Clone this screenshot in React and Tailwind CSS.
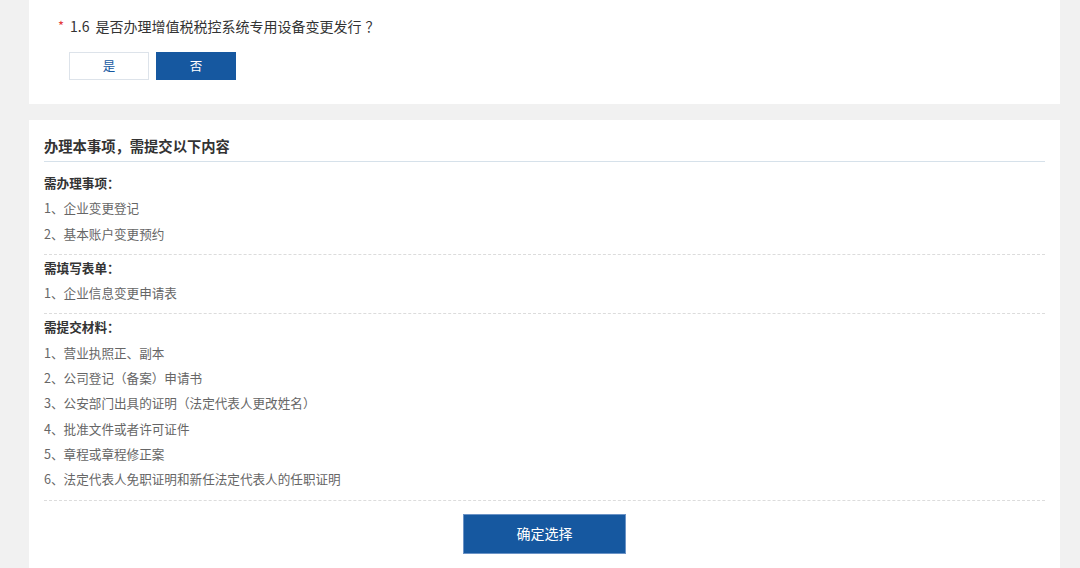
import React, { useState } from 'react';

const sections = [
  { title: '需办理事项：', items: ['1、企业变更登记', '2、基本账户变更预约'] },
  { title: '需填写表单：', items: ['1、企业信息变更申请表'] },
  {
    title: '需提交材料：',
    items: [
      '1、营业执照正、副本',
      '2、公司登记（备案）申请书',
      '3、公安部门出具的证明（法定代表人更改姓名）',
      '4、批准文件或者许可证件',
      '5、章程或章程修正案',
      '6、法定代表人免职证明和新任法定代表人的任职证明',
    ],
  },
];

// keep full-width punctuation at full width
const Zh = ({ text }) =>
  text.split(/([，：？（）、])/).map((part, i) =>
    /^[，：？（）、]$/.test(part) ? (
      <span key={i} className="inline-block w-[1em] text-center">{part}</span>
    ) : (
      part
    )
  );

const App = () => {
  const [answer, setAnswer] = useState('no');

  return (
    <div
      lang="zh-CN"
      className="min-h-screen bg-[#f1f1f1] pl-[29px] pr-[20px]"
      style={{ fontFamily: '"Noto Sans CJK SC", sans-serif' }}
    >
      {/* Question */}
      <div className="bg-white h-[104px] pl-[29px] pt-[16px]">
        <div className="flex items-center h-[20px] text-[14px] text-[#333]">
          <span className="text-[#e4393c] w-[12px] text-[13px]">*</span>
          <span className="mr-[6px]">1.6</span>
          <span>
            <Zh text="是否办理增值税税控系统专用设备变更发行" />
            <span className="inline-block w-[1em] pl-[4px]">？</span>
          </span>
        </div>
        <div className="flex gap-[7px] mt-[16px] ml-[11px]">
          <button
            onClick={() => setAnswer('yes')}
            className={`w-[80px] h-[28px] text-[12.5px] border ${
              answer === 'yes'
                ? 'bg-[#1658a0] border-[#1658a0] text-white'
                : 'bg-white border-[#dde3ea] text-[#1658a0]'
            }`}
          >
            是
          </button>
          <button
            onClick={() => setAnswer('no')}
            className={`w-[80px] h-[28px] text-[12.5px] border ${
              answer === 'no'
                ? 'bg-[#1658a0] border-[#1658a0] text-white'
                : 'bg-white border-[#dde3ea] text-[#1658a0]'
            }`}
          >
            否
          </button>
        </div>
      </div>

      {/* Requirements */}
      <div className="bg-white mt-[16px] px-[15px] pt-[16px] pb-[20px]">
        <h2 className="text-[14.3px] font-bold leading-[20px] text-[#333] pb-[5px] border-b border-[#d6e1ea]">
          <Zh text="办理本事项，需提交以下内容" />
        </h2>
        <div className="mt-[8px]">
          {sections.map((s) => (
            <div key={s.title} className="pb-[8px] border-b border-dashed border-[#dcdcdc] text-[12.6px] leading-[25.3px]">
              <p className="font-bold text-[#333]">
                <Zh text={s.title} />
              </p>
              {s.items.map((it) => (
                <p key={it} className="text-[#666]">
                  <Zh text={it} />
                </p>
              ))}
            </div>
          ))}
        </div>
        <div className="flex justify-center mt-[13px]">
          <button className="w-[163px] h-[40px] bg-[#1658a0] border border-[#6b93c6] text-white text-[14px]">
            确定选择
          </button>
        </div>
      </div>
    </div>
  );
};

export default App;
